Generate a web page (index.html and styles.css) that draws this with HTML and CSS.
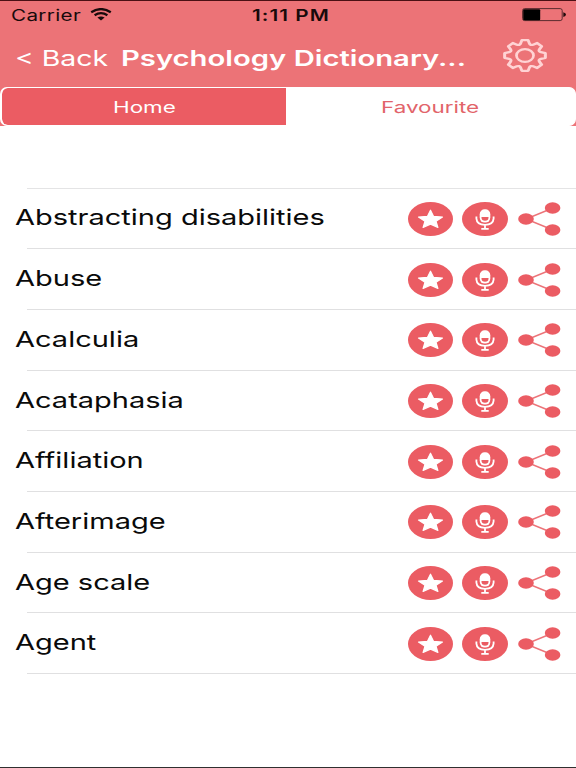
FILE: index.html
```
<!DOCTYPE html>
<html lang="en">
<head>
<meta charset="utf-8">
<title>Psychology Dictionary</title>
<link rel="stylesheet" href="styles.css">
</head>
<body>
<svg class="defs" aria-hidden="true">
  <symbol id="star" viewBox="0 0 45 34" preserveAspectRatio="none">
    <ellipse cx="22.5" cy="17" rx="22.5" ry="17" fill="#eb5c63"/>
    <path d="M22.5 8.2 25.6 14.4 34.5 15 28 19.3 29.9 25.5 22.5 22.1 15.1 25.5 17 19.3 10.5 15 19.4 14.4Z" fill="#fff" stroke="#fff" stroke-width="1.2" stroke-linejoin="round"/>
  </symbol>
  <symbol id="mic" viewBox="0 0 46 34" preserveAspectRatio="none">
    <ellipse cx="23" cy="17" rx="23" ry="17" fill="#eb5c63"/>
    <rect x="17.7" y="7.2" width="10.6" height="13.4" rx="5" fill="#fff"/>
    <path d="M19.5 15H26.5V15.8Q26.5 18.8 23 18.8T19.5 15.8Z" fill="#eb5c63"/>
    <path d="M14.4 14.5V16.6Q14.8 22.6 23 22.8Q31.2 22.6 31.6 16.6V14.5M23 22.8V27M19.3 26.9H26.7" fill="none" stroke="#fff" stroke-width="1.8"/>
  </symbol>
  <symbol id="share" viewBox="0 0 43 34" preserveAspectRatio="none">
    <path d="M35 6 8 17 35 28" fill="none" stroke="#ec7479" stroke-width="1.5"/>
    <g fill="#eb5c63"><ellipse cx="8" cy="17" rx="7.8" ry="5.8"/><ellipse cx="34.6" cy="6" rx="7.8" ry="5.8"/><ellipse cx="34.6" cy="28" rx="7.8" ry="5.8"/></g>
  </symbol>
</svg>
<div class="screen">
  <header class="top">
    <div class="status">
      <div class="carrier"><span class="wide">Carrier</span></div>
      <svg class="wifi" viewBox="0 0 22 13"><path d="M1.2 4.3Q11-2.1 20.8 4.3M4.6 7.2Q11 3.1 17.4 7.2" fill="none" stroke="#180a0b" stroke-width="2.3"/><path d="M7.4 9.6Q11 7.2 14.6 9.6L11 12.5Z" fill="#180a0b"/></svg>
      <div class="time"><span class="wide">1:11 PM</span></div>
      <svg class="battery" viewBox="0 0 45 14"><rect x=".6" y=".6" width="39.6" height="12" rx="2" fill="none" stroke="#5a2c2f" stroke-width="1"/><rect x="1.2" y="1.2" width="17" height="11" rx="1" fill="#000"/><path d="M41.3 4.3Q44 5 44 6.6T41.3 9Z" fill="#20090b"/></svg>
    </div>
    <nav class="nav">
      <div class="back"><span class="wide">&lt; Back</span></div>
      <h1 class="title"><span class="wide">Psychology Dictionary...</span></h1>
      <svg class="gear" viewBox="-16 -16 32 32" preserveAspectRatio="none">
        <path d="M14.8-2.3V2.3L11.6 3.2Q9.6 4 10.46 5.94L12.09 8.84 8.84 12.09 5.94 10.46Q4 9.6 3.2 11.6L2.3 14.8H-2.3L-3.2 11.6Q-4 9.6-5.94 10.46L-8.84 12.09-12.09 8.84-10.46 5.94Q-9.6 4-11.6 3.2L-14.8 2.3V-2.3L-11.6-3.2Q-9.6-4-10.46-5.94L-12.09-8.84-8.84-12.09-5.94-10.46Q-4-9.6-3.2-11.6L-2.3-14.8H2.3L3.2-11.6Q4-9.6 5.94-10.46L8.84-12.09 12.09-8.84 10.46-5.94Q9.6-4 11.6-3.2Z" fill="none" stroke="#ffd3d4" stroke-width="2.2" stroke-linejoin="round"/>
        <circle r="6.2" fill="none" stroke="#ffd3d4" stroke-width="2"/>
      </svg>
    </nav>
  </header>
  <div class="tabs-wrap">
    <div class="tabs">
      <div class="tab active"><span class="wide">Home</span></div>
      <div class="tab"><span class="wide">Favourite</span></div>
    </div>
  </div>
  <ul class="list">
    <li class="row"><div class="term"><span class="wide">Abstracting disabilities</span></div><svg class="star"><use href="#star"/></svg><svg class="mic"><use href="#mic"/></svg><svg class="share"><use href="#share"/></svg></li>
    <li class="row"><div class="term"><span class="wide">Abuse</span></div><svg class="star"><use href="#star"/></svg><svg class="mic"><use href="#mic"/></svg><svg class="share"><use href="#share"/></svg></li>
    <li class="row"><div class="term"><span class="wide">Acalculia</span></div><svg class="star"><use href="#star"/></svg><svg class="mic"><use href="#mic"/></svg><svg class="share"><use href="#share"/></svg></li>
    <li class="row"><div class="term"><span class="wide">Acataphasia</span></div><svg class="star"><use href="#star"/></svg><svg class="mic"><use href="#mic"/></svg><svg class="share"><use href="#share"/></svg></li>
    <li class="row"><div class="term"><span class="wide">Affiliation</span></div><svg class="star"><use href="#star"/></svg><svg class="mic"><use href="#mic"/></svg><svg class="share"><use href="#share"/></svg></li>
    <li class="row"><div class="term"><span class="wide">Afterimage</span></div><svg class="star"><use href="#star"/></svg><svg class="mic"><use href="#mic"/></svg><svg class="share"><use href="#share"/></svg></li>
    <li class="row"><div class="term"><span class="wide">Age scale</span></div><svg class="star"><use href="#star"/></svg><svg class="mic"><use href="#mic"/></svg><svg class="share"><use href="#share"/></svg></li>
    <li class="row"><div class="term"><span class="wide">Agent</span></div><svg class="star"><use href="#star"/></svg><svg class="mic"><use href="#mic"/></svg><svg class="share"><use href="#share"/></svg></li>
  </ul>
</div>
</body>
</html>
```
FILE: styles.css
```
* { box-sizing: border-box; }
body { margin: 0; font-family: Inter, "Liberation Sans", sans-serif; background: #fff; }
.defs { display: none; }
svg { display: block; }
.screen { width: 576px; height: 768px; overflow: hidden; display: flex; flex-direction: column; border-bottom: 1px solid #303030; }
/* Lettering is drawn about one third wider than the font's own proportions. */
.wide { display: inline-block; white-space: nowrap; transform: scaleX(1.333); transform-origin: left center; }

.top { height: 87px; flex: none; background: #ec7377; border-top: 1px solid #4b1014; }
.status { height: 28px; display: grid; grid-template-columns: 79px 162px 270px 45px; padding-left: 11px; align-items: center; color: #180a0b; font-size: 15.5px; line-height: 20px; }
.carrier, .time { padding-top: 1px; }
.carrier .wide { letter-spacing: .25px; }
.wifi { width: 22px; height: 13px; margin-top: -2px; }
.time { font-weight: 600; }
.time .wide { letter-spacing: .8px; }
.battery { width: 45px; height: 14px; }
.nav { height: 58px; display: grid; grid-template-columns: 106px 381px 44px; padding-left: 15px; align-items: center; color: #fff; font-size: 21.5px; line-height: 28px; }
.nav .back .wide { transform: scaleX(1.32); }
.title { margin: 0; font-size: 21.5px; font-weight: 600; line-height: 28px; }
.title .wide { transform: scaleX(1.36); }
.gear { width: 44px; height: 33px; margin: -5px 0 0 1px; }

.tabs-wrap { height: 39px; flex: none; background: #ec7377; }
.tabs { height: 39px; display: grid; grid-template-columns: 284px 1fr; border: 1px solid #fff; border-left-width: 2px; border-radius: 7px; background: #fff; overflow: hidden; }
.tab { display: flex; align-items: center; justify-content: center; color: #e2646a; font-size: 16px; line-height: 20px; }
.tab .wide { transform: scaleX(1.4); transform-origin: center; }
.active { background: #eb5c63; color: #fff; border-radius: 6px 0 0 6px; }

.list { list-style: none; margin: 61.6px 0 0 27px; padding: 0; border-top: 1px solid #e4e4e5; }
.row { height: 60.7px; display: grid; grid-template-columns: 384px 45px 46px 43px; column-gap: 9px; margin-left: -12px; align-items: center; background: linear-gradient(#e0e0e1, #e0e0e1) 12px 100% / 100% 1px no-repeat; }
.term { color: #0a0a0a; font-size: 22px; line-height: 28px; padding-bottom: 3px; }
.term .wide { transform: scaleX(1.318); }
.star { width: 45px; height: 34px; }
.mic { width: 46px; height: 34px; }
.share { width: 43px; height: 34px; margin-left: 1px; }
```
